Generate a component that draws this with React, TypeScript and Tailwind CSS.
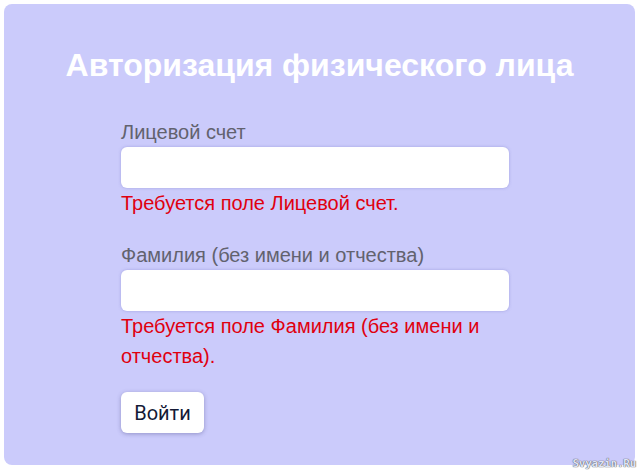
import React from 'react'

const FONT = "font-['Liberation_Sans',Arial,sans-serif]"

function Field({ label, error }: { label: string; error: string }) {
  return (
    <div className="flex flex-col">
      <label className="text-[20px] leading-[27px] text-[#62626e]">{label}</label>
      <input
        type="text"
        className="mt-px h-[41px] w-[388px] rounded-md bg-white shadow-[0_0_3px_rgba(120,120,200,0.5)] outline-none"
      />
      <div className="w-[388px] text-[20px] leading-[30px] text-[#e0000f]">{error}</div>
    </div>
  )
}

export default function App() {
  return (
    <div className={`relative h-[472px] w-[640px] bg-white pl-1 pt-1 ${FONT}`}>
      <div className="flex h-[461px] w-[631px] flex-col rounded-lg bg-[#cbcbfb]">
        <h1 className="mt-[42px] text-center text-[32px] font-bold leading-[38px] text-white">
          Авторизация физического лица
        </h1>
        <form className="ml-[117px] mt-[35px] flex flex-col gap-[24px]">
          <Field label="Лицевой счет" error="Требуется поле Лицевой счет." />
          <Field label="Фамилия (без имени и отчества)" error="Требуется поле Фамилия (без имени и отчества)." />
          <button
            type="button"
            className="-mt-[3px] h-[41px] w-[83px] rounded-md bg-white font-['Roboto',sans-serif] text-[20px] text-[#141a36] shadow-[0_1px_4px_rgba(80,80,140,0.45)]"
          >
            Войти
          </button>
        </form>
      </div>
      <div className="absolute bottom-px right-1 font-['DejaVu_Sans_Mono',monospace] text-[11px] font-bold leading-[14px] tracking-tight text-[#dfe3f5] [text-shadow:0_0_1px_#555,0_0_1px_#555]">
        Svyazin.Ru
      </div>
    </div>
  )
}
